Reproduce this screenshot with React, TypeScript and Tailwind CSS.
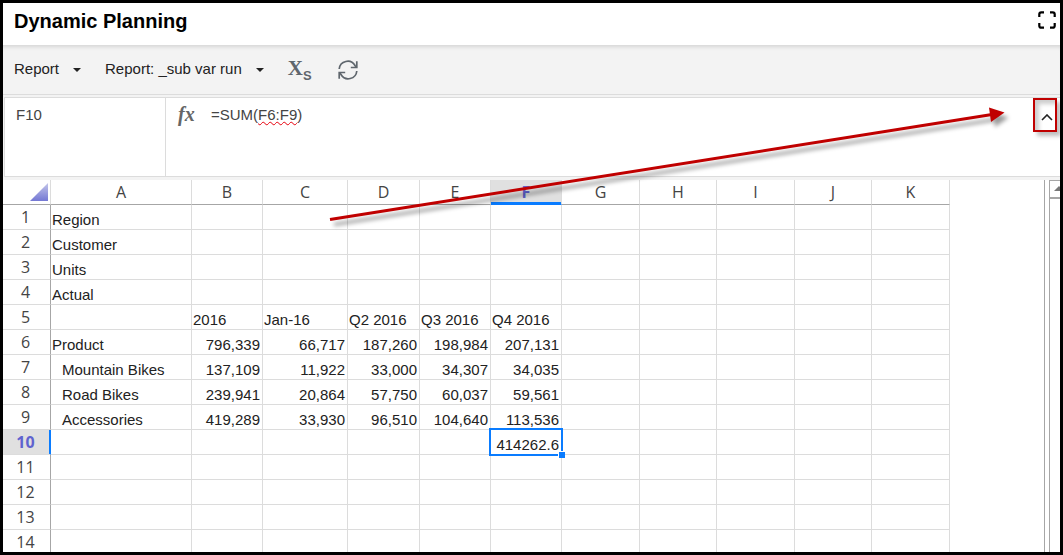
import clsx from 'clsx';

type Column = { name: string; width: string };

const COLUMNS: Column[] = [
  { name: 'A', width: 'w-[141px]' },
  { name: 'B', width: 'w-[71px]' },
  { name: 'C', width: 'w-[85px]' },
  { name: 'D', width: 'w-[72px]' },
  { name: 'E', width: 'w-[71px]' },
  { name: 'F', width: 'w-[71px]' },
  { name: 'G', width: 'w-[78px]' },
  { name: 'H', width: 'w-[77px]' },
  { name: 'I', width: 'w-[78px]' },
  { name: 'J', width: 'w-[77px]' },
  { name: 'K', width: 'w-[78px]' },
];

const ROWS: string[][] = [
  ['Region'],
  ['Customer'],
  ['Units'],
  ['Actual'],
  ['', '2016', 'Jan-16', 'Q2 2016', 'Q3 2016', 'Q4 2016'],
  ['Product', '796,339', '66,717', '187,260', '198,984', '207,131'],
  ['Mountain Bikes', '137,109', '11,922', '33,000', '34,307', '34,035'],
  ['Road Bikes', '239,941', '20,864', '57,750', '60,037', '59,561'],
  ['Accessories', '419,289', '33,930', '96,510', '104,640', '113,536'],
  ['', '', '', '', '', '414262.6'],
  [],
  [],
  [],
  [],
];

const ACTIVE_COL = 5;
const ACTIVE_ROW = 9;

function Caret() {
  return (
    <svg viewBox="0 0 8 4" className="h-1 w-2" aria-hidden="true">
      <path d="M0 0H8L4 4Z" fill="#222" />
    </svg>
  );
}

function TitleBar() {
  return (
    <header className="flex h-[43px] shrink-0 items-start justify-between border-b border-[#dcdcdc] bg-white pt-1 pr-1 pl-[11px]">
      <h1 className="text-[20px] leading-7 font-bold text-black">Dynamic Planning</h1>
      <button type="button" aria-label="Full screen" className="mt-1">
        <svg viewBox="0 0 18 18" className="size-[18px]" fill="none" stroke="#000" strokeWidth="2.2">
          <path d="M1.300 6V3.300Q1.300 1.300 3.300 1.300H6M12 1.300H14.700Q16.700 1.300 16.700 3.300V6M16.700 12V14.700Q16.700 16.700 14.700 16.700H12M6 16.700H3.300Q1.300 16.700 1.300 14.700V12" />
        </svg>
      </button>
    </header>
  );
}

function Toolbar() {
  return (
    <div className="flex h-[49px] shrink-0 items-center border-b border-[#dcdcdc] bg-[#f3f3f3] pb-px pl-[11px] text-[15px] text-[#222] shadow-[inset_0_4px_4px_-3px_rgba(0,0,0,0.12)]">
      <button type="button" className="flex items-center gap-[14px]">
        Report
        <Caret />
      </button>
      <button type="button" className="ml-6 flex items-center gap-[14px]">
        Report: _sub var run
        <Caret />
      </button>
      <button type="button" aria-label="Substitution variables" className="ml-6 flex items-end text-[#5f666d]">
        <span className="pb-1 font-['Liberation_Serif',serif] text-[21px] leading-6 font-bold">X</span>
        <span className="text-[13px] leading-4 font-bold">S</span>
      </button>
      <button type="button" aria-label="Refresh" className="ml-[26px]">
        <svg viewBox="0 0 20 20" className="size-5" fill="none" stroke="#5f666d" strokeWidth="1.7">
          <path d="M1.200 9A8.500 8.500 0 0 1 17 5.500L18.500 7.300M18.800 1.300V7.500H12.800" />
          <path d="M18.800 11A8.500 8.500 0 0 1 3 14.500L1.500 12.700M1.200 18.700V12.500H7.200" />
        </svg>
      </button>
    </div>
  );
}

function FormulaBar() {
  return (
    <div className="shrink-0 bg-[#f3f3f3] pt-[2px] pb-[3px] pl-px">
      <div className="flex h-20 border-y border-l border-[#dcdcdc] bg-white text-[15px] text-[#444]">
        <div className="w-[161px] border-r border-[#dcdcdc] px-[11px] pt-2 leading-[18px]">F10</div>
        <div className="flex flex-1 items-start pt-2 pl-3 leading-[18px]">
          <span className="w-[33px] font-['Liberation_Serif',serif] text-[20px] leading-4 font-bold text-[#666] italic">fx</span>
          <span>
            =SUM(
            <span className="underline decoration-red-600 decoration-wavy decoration-1 underline-offset-1">F6:F9</span>)
          </span>
        </div>
        <button
          type="button"
          aria-label="Collapse formula bar"
          className="mr-[3px] flex h-[34px] w-6 items-center justify-center border-2 border-[#c00000] pt-1 pl-1 shadow-[4px_4px_4px_rgba(0,0,0,0.25),inset_4px_4px_4px_rgba(0,0,0,0.2)]"
        >
          <svg viewBox="0 0 12 7" className="h-[7px] w-3" fill="none" stroke="#222" strokeWidth="1.6">
            <path d="M1 6L6 1L11 6" />
          </svg>
        </button>
      </div>
    </div>
  );
}

function Cell({ value, row, col }: { value: string; row: number; col: number }) {
  const active = row === ACTIVE_ROW && col === ACTIVE_COL;
  return (
    <td
      className={clsx(
        'border-r border-b border-[#dcdcdc] pt-0 pr-[2px] pb-px align-bottom whitespace-nowrap',
        col > 0 && row > 4 && 'text-right',
        col === 0 && row > 5 ? 'pl-[11px]' : 'pl-px',
        active && 'relative',
      )}
    >
      {value}
      {active && (
        <div className="pointer-events-none absolute -inset-0.5 border-2 border-[#0a7cff]">
          <div className="absolute -right-1 -bottom-1 size-[7px] border-t border-l border-white bg-[#0a7cff]" />
        </div>
      )}
    </td>
  );
}

function Sheet() {
  return (
    <table className="w-[947px] table-fixed border-separate border-spacing-0 text-[15px] leading-[17px] text-[#222]">
      <thead className="font-['Open_Sans',sans-serif] text-[16px] leading-5 text-[#444]">
        <tr className="h-[25px]">
          <th className="w-12 border-r border-b border-r-[#dcdcdc] border-b-[#a6a6a6] p-0">
            <svg viewBox="0 0 18 18" className="mr-[2px] ml-auto size-[18px]" aria-hidden="true">
              <defs>
                <linearGradient id="corner" x1="0" y1="0" x2="0" y2="1">
                  <stop offset="0" stopColor="#c3c5ea" />
                  <stop offset="1" stopColor="#7478d4" />
                </linearGradient>
              </defs>
              <path d="M18 0V18H0Z" fill="url(#corner)" />
            </svg>
          </th>
          {COLUMNS.map((col, i) => (
            <th
              key={col.name}
              className={clsx(
                'border-r border-b border-r-[#dcdcdc] p-0',
                col.width,
                i === ACTIVE_COL
                  ? 'border-b-[#0a7cff] bg-[#e0e0e0] font-bold text-[#5f63cf] shadow-[inset_0_-2px_0_#0a7cff]'
                  : 'border-b-[#a6a6a6] font-normal',
              )}
            >
              {col.name}
            </th>
          ))}
        </tr>
      </thead>
      <tbody>
        {ROWS.map((row, r) => (
          <tr key={r} className="h-[25px]">
            <th
              className={clsx(
                "border-r border-b border-b-[#dcdcdc] py-0 pr-[2px] pl-0 font-['Open_Sans',sans-serif] text-[16px] leading-5",
                r === ACTIVE_ROW
                  ? 'border-r-[#0a7cff] bg-[#e0e0e0] font-bold text-[#5f63cf] shadow-[inset_-1px_0_0_#0a7cff]'
                  : 'border-r-[#a6a6a6] font-normal text-[#444]',
              )}
            >
              {r + 1}
            </th>
            {COLUMNS.map((col, c) => (
              <Cell key={col.name} value={row[c] ?? ''} row={r} col={c} />
            ))}
          </tr>
        ))}
      </tbody>
    </table>
  );
}

function ScrollTrack() {
  return (
    <div className="flex w-4 shrink-0 border-l border-[#a6a6a6] pl-1">
      <div className="min-w-0 flex-1 border-l border-[#a6a6a6]">
        <div className="h-[19px] overflow-hidden border-t border-b-2 border-[#a6a6a6]">
          <svg viewBox="0 0 10 5" className="mt-[5px] ml-1 h-[5px] w-[10px] max-w-none" aria-hidden="true">
            <path d="M5 0L10 5H0Z" fill="#777" />
          </svg>
        </div>
      </div>
    </div>
  );
}

function CalloutArrow() {
  return (
    <svg
      className="pointer-events-none absolute top-0 left-0 h-60 w-[1030px]"
      viewBox="0 0 1030 240"
      style={{ filter: 'drop-shadow(4px 5px 2px rgba(0,0,0,0.4))' }}
      aria-hidden="true"
    >
      <path d="M330 219.5L992 114.5" stroke="#c00000" strokeWidth="3" />
      <path d="M989 107.5L1004.500 112.500L991 122Z" fill="#c00000" />
    </svg>
  );
}

export default function App() {
  return (
    <div className="relative h-screen overflow-hidden bg-black p-[3px] font-['Liberation_Sans',Arial,sans-serif]">
      <div className="flex h-full flex-col overflow-hidden bg-white">
        <TitleBar />
        <Toolbar />
        <FormulaBar />
        <main className="flex min-h-0 flex-1 bg-white">
          <div className="min-w-0 flex-1 overflow-hidden">
            <Sheet />
          </div>
          <ScrollTrack />
        </main>
      </div>
      <CalloutArrow />
    </div>
  );
}
